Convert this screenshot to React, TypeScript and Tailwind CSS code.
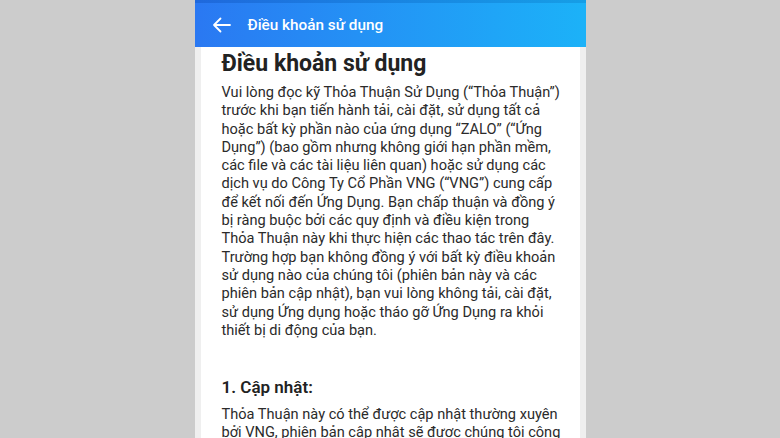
const bodyLines = [
  "Vui lòng đọc kỹ Thỏa Thuận Sử Dụng (“Thỏa Thuận”)",
  "trước khi bạn tiến hành tải, cài đặt, sử dụng tất cả",
  "hoặc bất kỳ phần nào của ứng dụng “ZALO” (“Ứng",
  "Dụng”) (bao gồm nhưng không giới hạn phần mềm,",
  "các file và các tài liệu liên quan) hoặc sử dụng các",
  "dịch vụ do Công Ty Cổ Phần VNG (“VNG”) cung cấp",
  "để kết nối đến Ứng Dụng. Bạn chấp thuận và đồng ý",
  "bị ràng buộc bởi các quy định và điều kiện trong",
  "Thỏa Thuận này khi thực hiện các thao tác trên đây.",
  "Trường hợp bạn không đồng ý với bất kỳ điều khoản",
  "sử dụng nào của chúng tôi (phiên bản này và các",
  "phiên bản cập nhật), bạn vui lòng không tải, cài đặt,",
  "sử dụng Ứng dụng hoặc tháo gỡ Ứng Dụng ra khỏi",
  "thiết bị di động của bạn.",
];

const updateLines = [
  "Thỏa Thuận này có thể được cập nhật thường xuyên",
  "bởi VNG, phiên bản cập nhật sẽ được chúng tôi công",
];

export default function App() {
  return (
    <div
      className="flex h-[438px] w-full justify-center overflow-hidden bg-[#cccccc]"
      style={{ fontFamily: "Roboto, 'Noto Sans', sans-serif" }}
    >
      <div className="flex w-[391px] flex-col">
        <header className="flex h-[47px] shrink-0 flex-col bg-gradient-to-r from-[#2a78f2] to-[#1cb2f8]">
          <div className="h-[3px] bg-gradient-to-r from-[#1f68dc] to-[#169ee6]" />
          <div className="flex flex-1 items-center pl-[17px]">
            <svg
              width="19"
              height="16"
              viewBox="0 0 19 16"
              fill="none"
              stroke="white"
              strokeWidth="1.8"
              strokeLinecap="round"
              strokeLinejoin="round"
            >
              <path d="M18 8H2M8.5 1.5 2 8l6.5 6.5" />
            </svg>
            <span className="ml-[17px] text-[15.3px] font-medium text-white">
              Điều khoản sử dụng
            </span>
          </div>
        </header>
        <div className="flex-1 bg-[#efefef] px-[6px]">
          <div className="h-full overflow-hidden bg-white pl-[21px] pt-[3px] text-[#2b2b2b]">
            <h1 className="text-[23px] font-bold leading-[28px] text-[#222]">
              Điều khoản sử dụng
            </h1>
            <p className="mt-[5px] whitespace-nowrap text-[14.6px] leading-[18.3px]">
              {bodyLines.map((l, i) => (
                <span key={i} className="block">
                  {l}
                </span>
              ))}
            </p>
            <h2 className="mt-[36px] text-[17px] font-semibold leading-[24px] text-[#222]">
              1. Cập nhật:
            </h2>
            <p className="mt-[6px] whitespace-nowrap text-[14.6px] leading-[18.3px]">
              {updateLines.map((l, i) => (
                <span key={i} className="block">
                  {l}
                </span>
              ))}
            </p>
          </div>
        </div>
      </div>
    </div>
  );
}
